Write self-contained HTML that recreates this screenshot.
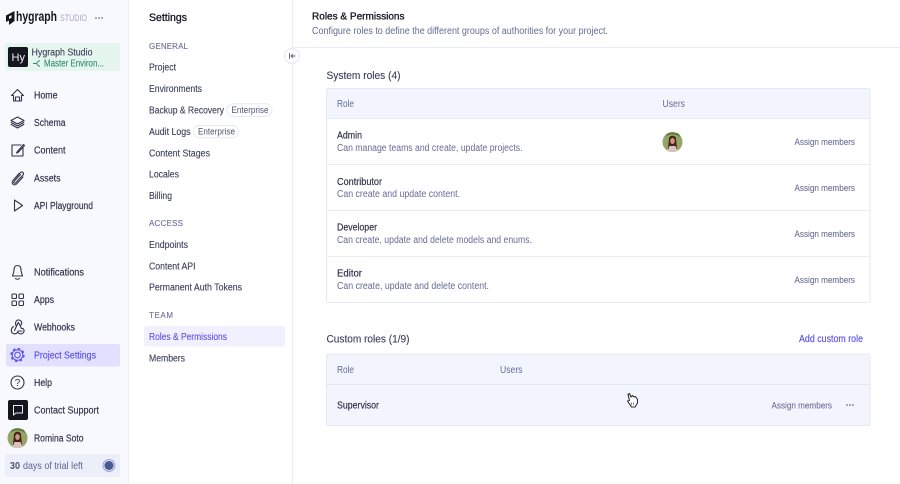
<!DOCTYPE html>
<html lang="en"><head><meta charset="utf-8"><title>Roles &amp; Permissions</title>
<style>
html,body{margin:0;padding:0;background:#fff;width:900px;height:484px;overflow:hidden}
svg{display:block;position:absolute;left:0;top:0}
text{font-family:"Liberation Sans",sans-serif;font-size:10px}
.n{fill:#2e2f45;stroke:#2e2f45;stroke-width:.16}
.s{fill:#3b3d58;stroke:#3b3d58;stroke-width:.12}
.d{fill:#666a96}
.h{fill:#6c7096;font-size:8px;stroke:#6c7096;stroke-width:.12}
.t{fill:#161722;stroke:#161722;stroke-width:.32}
.a{fill:#6e7199;font-size:9.5px;stroke:#6e7199;stroke-width:.12}
.i{fill:none;stroke:#33344a;stroke-width:1.1;stroke-linecap:round;stroke-linejoin:round}
</style></head><body>
<svg width="900" height="484" viewBox="0 0 900 484" xmlns="http://www.w3.org/2000/svg">
<rect width="900" height="484" fill="#fff"/>
<rect width="128" height="484" fill="#f8f9fe"/><rect x="128" width="1" height="484" fill="#eef0f8"/>
<rect x="292" width="1" height="484" fill="#e9ecf6"/>
<rect x="293" y="47" width="607" height="1" fill="#e9ecf6"/>

<!-- logo -->
<path d="M6 15.500L14.500 11V21L9 25V20.500L6 22ZM9 16.500V19L11.500 17.700V15Z" fill="#15151f" fill-rule="evenodd"/>
<text x="16" y="21" textLength="41" lengthAdjust="spacingAndGlyphs" style="font-size:13.5px;font-weight:700;fill:#15151f">hygraph</text>
<text x="60" y="21" textLength="27" lengthAdjust="spacingAndGlyphs" style="font-size:9px;fill:#a4a7cc">STUDIO</text>
<g fill="#4a4c68"><circle cx="96" cy="18" r=".8"/><circle cx="99" cy="18" r=".8"/><circle cx="102" cy="18" r=".8"/></g>

<!-- project card -->
<rect x="5" y="43" width="115" height="28" rx="2" fill="#e5f6ee"/>
<rect x="8" y="47" width="20" height="20" rx="2" fill="#15151f"/>
<text x="11.500" y="61" textLength="13.500" lengthAdjust="spacingAndGlyphs" style="font-size:11px;fill:#f0f0f5">Hy</text>
<text class="s" x="31.500" y="55.500" textLength="61" lengthAdjust="spacingAndGlyphs">Hygraph Studio</text>
<path d="M33 63.500H36.500L38.500 61H40M36.500 63.500L38.500 66H40" fill="none" stroke="#2f8a68" stroke-width=".9"/>
<text x="44" y="66.500" textLength="60" lengthAdjust="spacingAndGlyphs" style="fill:#2f8a68;stroke:#2f8a68;stroke-width:.1">Master Environ...</text>

<!-- active nav -->
<rect x="6" y="344" width="114" height="22.500" rx="2" fill="#e1e0fe"/>

<!-- nav icons -->
<path class="i" d="M11.500 95.500L17.500 89.500L23.500 95.500H21.500V101H13.500V95.500ZM15.500 101V97H19.500V101"/>
<path class="i" d="M17.500 117L24 120.500L17.500 124L11 120.500ZM11.200 122.500L17.500 126L23.800 122.500M11.200 124.500L17.500 128L23.800 124.500" stroke-width=".9"/>
<path class="i" d="M21 145H12V156H23V148M17 152L23.500 144.500L24.500 145.500L18 152.500L16.500 153Z"/>
<path class="i" d="M14 179.500L20.500 172.500C22 171 24.500 173 23 175L15.500 183C14.500 184 13 182.500 14 181.500L20.500 174.500M23 177L16.500 184C14 186.500 10.500 183 13 180.500L19 173.500"/>
<path class="i" d="M14.500 200L22.500 205.500L14.500 211Z"/>
<path class="i" d="M17.500 265.500C14.500 265.500 14 268 14 270C14 273 12.500 275 12.500 276H22.500C22.500 275 21 273 21 270C21 268 20.500 265.500 17.500 265.500ZM15.500 278.500C16.500 279.500 18.500 279.500 19.500 278.500"/>
<g class="i"><rect x="12" y="294" width="4.500" height="4.500" rx="1"/><rect x="19" y="294" width="4.500" height="4.500" rx="1"/><rect x="12" y="301" width="4.500" height="4.500" rx="1"/><rect x="19" y="301" width="4.500" height="4.500" rx="1"/></g>
<path class="i" d="M16 325.500C14.500 322 17 319.500 19 320C21.500 320.300 22.500 323 21 325M18.500 322.500L21.500 328.500C24 328 25 331 23 333C21.500 334.500 19 334 18 332.500M13.500 326.500C11 328 10.500 332 13 333.500C15.500 334.500 18 333 18 331H22M18 323L14.500 330.500" stroke-width="1"/>
<g fill="none" stroke="#5b50e6"><circle cx="17.500" cy="355" r="2.800" stroke-width="1.100"/><circle cx="17.500" cy="355" r="5.300" stroke-width="1"/><circle cx="17.500" cy="355" r="6.400" stroke-width="1.500" stroke-dasharray="2.600 2.430"/></g>
<circle class="i" cx="17.500" cy="382.500" r="6.500"/>
<text x="14.800" y="386" style="font-size:10px;fill:#33344a">?</text>
<rect x="8" y="400" width="20" height="20" rx="2" fill="#15151f"/>
<path d="M13.500 405.500H22.500V413H16L13.500 415Z" fill="none" stroke="#e8e8ee" stroke-width="1"/>

<!-- avatar sidebar -->
<circle cx="17.500" cy="438" r="10" fill="#93a668"/>
<path d="M10 434C12 429 24 429 26 435L24 430C21 428 14 428 12 430Z" fill="#5f7a3e"/>
<path d="M13 445L14 434C15 431 20 431 21 434L22 445Z" fill="#4a211c"/>
<ellipse cx="17.500" cy="437" rx="2.300" ry="3" fill="#c99a7f"/>
<path d="M12.500 447L14.500 442H20.500L22.500 447C20 448.500 15 448.500 12.500 447Z" fill="#d8c2bb"/>

<!-- nav labels -->
<text class="n" x="34" y="98.300" textLength="23.500" lengthAdjust="spacingAndGlyphs">Home</text>
<text class="n" x="34" y="126" textLength="31.500" lengthAdjust="spacingAndGlyphs">Schema</text>
<text class="n" x="34" y="153.500" textLength="31.500" lengthAdjust="spacingAndGlyphs">Content</text>
<text class="n" x="34" y="181.300" textLength="26.500" lengthAdjust="spacingAndGlyphs">Assets</text>
<text class="n" x="34" y="209" textLength="59" lengthAdjust="spacingAndGlyphs">API Playground</text>
<text class="n" x="34" y="275.300" textLength="50" lengthAdjust="spacingAndGlyphs">Notifications</text>
<text class="n" x="34" y="303" textLength="20" lengthAdjust="spacingAndGlyphs">Apps</text>
<text class="n" x="34" y="330.500" textLength="41" lengthAdjust="spacingAndGlyphs">Webhooks</text>
<text x="34" y="358.300" textLength="62" lengthAdjust="spacingAndGlyphs" style="fill:#5b50e6;stroke:#5b50e6;stroke-width:.14">Project Settings</text>
<text class="n" x="34" y="386" textLength="18" lengthAdjust="spacingAndGlyphs">Help</text>
<text class="n" x="34" y="413.500" textLength="65" lengthAdjust="spacingAndGlyphs">Contact Support</text>
<text class="n" x="34" y="441.300" textLength="49.500" lengthAdjust="spacingAndGlyphs">Romina Soto</text>

<!-- trial -->
<rect x="5" y="454" width="115" height="23" rx="2.500" fill="#eceffa"/>
<text x="10" y="469" textLength="10" lengthAdjust="spacingAndGlyphs" style="font-weight:700;fill:#4f5272">30</text>
<text x="23" y="469" textLength="60" lengthAdjust="spacingAndGlyphs" style="fill:#5f6390">days of trial left</text>
<circle cx="109" cy="465.500" r="6" fill="#d7dbf1" stroke="#8b90bd" stroke-width=".7"/>
<circle cx="109" cy="465.500" r="4.500" fill="#4c5a94"/>

<!-- secondary nav -->
<text class="t" x="149" y="21" textLength="38" lengthAdjust="spacingAndGlyphs" style="font-size:11px">Settings</text>
<text class="h" x="149" y="49" textLength="39" lengthAdjust="spacing">GENERAL</text>
<text class="s" x="149" y="70.300" textLength="27" lengthAdjust="spacingAndGlyphs">Project</text>
<text class="s" x="149" y="92" textLength="53" lengthAdjust="spacingAndGlyphs">Environments</text>
<text class="s" x="149" y="113.300" textLength="75" lengthAdjust="spacingAndGlyphs">Backup &amp; Recovery</text>
<rect x="227" y="103.800" width="45" height="12.500" rx="6.200" fill="#fff" stroke="#dfe2f3" stroke-width=".8"/>
<text class="a" x="231.500" y="113" textLength="37" lengthAdjust="spacingAndGlyphs" style="font-size:9px;fill:#4f5272;stroke:none">Enterprise</text>
<text class="s" x="149" y="134.800" textLength="41.500" lengthAdjust="spacingAndGlyphs">Audit Logs</text>
<rect x="193.500" y="125.300" width="45" height="12.500" rx="6.200" fill="#fff" stroke="#dfe2f3" stroke-width=".8"/>
<text class="a" x="198" y="134.500" textLength="37" lengthAdjust="spacingAndGlyphs" style="font-size:9px;fill:#4f5272;stroke:none">Enterprise</text>
<text class="s" x="149" y="156.300" textLength="61" lengthAdjust="spacingAndGlyphs">Content Stages</text>
<text class="s" x="149" y="177.500" textLength="30" lengthAdjust="spacingAndGlyphs">Locales</text>
<text class="s" x="149" y="199" textLength="23" lengthAdjust="spacingAndGlyphs">Billing</text>
<text class="h" x="149" y="226" textLength="34" lengthAdjust="spacing">ACCESS</text>
<text class="s" x="149" y="247.800" textLength="39" lengthAdjust="spacingAndGlyphs">Endpoints</text>
<text class="s" x="149" y="269.300" textLength="46.500" lengthAdjust="spacingAndGlyphs">Content API</text>
<text class="s" x="149" y="290.500" textLength="93" lengthAdjust="spacingAndGlyphs">Permanent Auth Tokens</text>
<text class="h" x="149" y="318" textLength="24" lengthAdjust="spacing">TEAM</text>
<rect x="144" y="326" width="141" height="20.500" rx="2" fill="#f1f0fe"/>
<text x="149" y="339.800" textLength="78" lengthAdjust="spacingAndGlyphs" style="fill:#5b50e6;stroke:#5b50e6;stroke-width:.12">Roles &amp; Permissions</text>
<text class="s" x="149" y="361.300" textLength="36" lengthAdjust="spacingAndGlyphs">Members</text>

<!-- collapse toggle -->
<circle cx="292" cy="56" r="7.500" fill="#fff" stroke="#dfe2f3" stroke-width=".8"/>
<path d="M289.500 53V59M295.500 56H291M293 54L291 56L293 58" fill="none" stroke="#5f6390" stroke-width=".9"/>

<!-- header -->
<text class="t" x="312" y="19.500" textLength="92.500" lengthAdjust="spacingAndGlyphs" style="font-size:10.500px">Roles &amp; Permissions</text>
<text class="d" x="312" y="34" textLength="296" lengthAdjust="spacingAndGlyphs">Configure roles to define the different groups of authorities for your project.</text>

<!-- system roles -->
<text class="s" x="326.500" y="79" textLength="74" lengthAdjust="spacingAndGlyphs" style="font-size:11px">System roles (4)</text>
<rect x="326.500" y="88.500" width="543.500" height="214" rx="2" fill="#fff" stroke="#e6e9f5"/>
<path d="M326.500 118.500V90.500a2 2 0 0 1 2-2H868a2 2 0 0 1 2 2V118.500Z" fill="#f2f5fd" stroke="#e6e9f5"/>
<path d="M327 164.500H870M327 210.500H870M327 256.500H870" stroke="#e9ecf6"/>
<text class="d" x="337" y="107" textLength="17" lengthAdjust="spacingAndGlyphs">Role</text>
<text class="d" x="662.500" y="107" textLength="22.500" lengthAdjust="spacingAndGlyphs">Users</text>
<text class="n" x="337" y="138.500" textLength="25" lengthAdjust="spacingAndGlyphs">Admin</text>
<text class="d" x="337" y="151" textLength="185.500" lengthAdjust="spacingAndGlyphs">Can manage teams and create, update projects.</text>
<circle cx="672.500" cy="142" r="10" fill="#93a668"/>
<path d="M665 138C667 133 679 133 681 139L679 134C676 132 669 132 667 134Z" fill="#5f7a3e"/>
<path d="M668 149L669 138C670 135 675 135 676 138L677 149Z" fill="#4a211c"/>
<ellipse cx="672.500" cy="141" rx="2.300" ry="3" fill="#c99a7f"/>
<path d="M667.500 151L669.500 146H675.500L677.500 151C675 152.500 670 152.500 667.500 151Z" fill="#d8c2bb"/>
<text class="a" x="794.500" y="145" textLength="60.500" lengthAdjust="spacingAndGlyphs">Assign members</text>
<text class="n" x="337" y="184.800" textLength="45" lengthAdjust="spacingAndGlyphs">Contributor</text>
<text class="d" x="337" y="197" textLength="123" lengthAdjust="spacingAndGlyphs">Can create and update content.</text>
<text class="a" x="794.500" y="191" textLength="60.500" lengthAdjust="spacingAndGlyphs">Assign members</text>
<text class="n" x="337" y="230.500" textLength="40" lengthAdjust="spacingAndGlyphs">Developer</text>
<text class="d" x="337" y="243" textLength="195" lengthAdjust="spacingAndGlyphs">Can create, update and delete models and enums.</text>
<text class="a" x="794.500" y="236.800" textLength="60.500" lengthAdjust="spacingAndGlyphs">Assign members</text>
<text class="n" x="337" y="276.300" textLength="25" lengthAdjust="spacingAndGlyphs">Editor</text>
<text class="d" x="337" y="288.800" textLength="152" lengthAdjust="spacingAndGlyphs">Can create, update and delete content.</text>
<text class="a" x="794.500" y="282.800" textLength="60.500" lengthAdjust="spacingAndGlyphs">Assign members</text>

<!-- custom roles -->
<text class="s" x="326.500" y="342.500" textLength="83" lengthAdjust="spacingAndGlyphs" style="font-size:11px">Custom roles (1/9)</text>
<text x="799" y="342" textLength="64" lengthAdjust="spacingAndGlyphs" style="fill:#5b50e6;stroke:#5b50e6;stroke-width:.15">Add custom role</text>
<rect x="326.500" y="354" width="543.500" height="71.500" rx="2" fill="#f2f5fd" stroke="#e6e9f5"/>
<path d="M327 384.500H870" stroke="#e4e7f3"/>
<text class="d" x="337" y="372.800" textLength="17" lengthAdjust="spacingAndGlyphs">Role</text>
<text class="d" x="500" y="372.800" textLength="22.500" lengthAdjust="spacingAndGlyphs">Users</text>
<text class="n" x="337" y="408.300" textLength="42" lengthAdjust="spacingAndGlyphs">Supervisor</text>
<text class="a" x="771.500" y="408.300" textLength="60.500" lengthAdjust="spacingAndGlyphs">Assign members</text>
<g fill="#4a4c68"><circle cx="847" cy="405" r=".8"/><circle cx="850" cy="405" r=".8"/><circle cx="853" cy="405" r=".8"/></g>

<!-- cursor -->
<path d="M628 394.500L629.500 393.500L631 397L632.500 395.500L634 397L635.500 396.500L637.500 399.500L637.500 403L635 407H631.500L627.500 401L629.500 400.500Z" fill="#fff" stroke="#2b2b2b" stroke-width="1.100" stroke-linejoin="round"/>
<path d="M631.500 402.500V405M633.500 402.500V405" stroke="#555" stroke-width=".7"/>
</svg>
</body></html>
